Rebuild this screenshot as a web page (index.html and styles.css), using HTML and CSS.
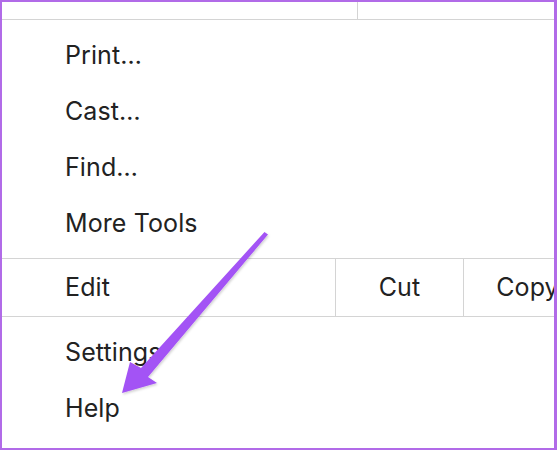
FILE: index.html
```html
<!DOCTYPE html>
<html lang="en">
<head>
<meta charset="utf-8">
<title>Menu</title>
<link rel="stylesheet" href="styles.css">
</head>
<body>
<div class="frame">
  <div class="top-strip">
    <div class="top-cell"></div>
    <div class="top-cell"></div>
  </div>
  <div class="section">
    <div class="item">Print…</div>
    <div class="item">Cast…</div>
    <div class="item">Find…</div>
    <div class="item">More Tools</div>
  </div>
  <div class="edit-row">
    <div class="edit-label">Edit</div>
    <div class="edit-btn">Cut</div>
    <div class="edit-btn">Copy</div>
  </div>
  <div class="section">
    <div class="item">Settings</div>
    <div class="item">Help</div>
  </div>
</div>
<svg class="arrow" width="560" height="450" viewBox="0 0 560 450" aria-hidden="true">
  <defs>
    <filter id="sh" x="-20%" y="-20%" width="140%" height="140%">
      <feDropShadow dx="1" dy="1.5" stdDeviation="1" flood-color="#000" flood-opacity="0.18"/>
    </filter>
  </defs>
  <polygon filter="url(#sh)" fill="#a352f5" points="122,393 157,383 148,377 268,234.5 264.5,232 141,368 130,362"/>
</svg>
</body>
</html>
```

FILE: styles.css
```css
html, body {
  margin: 0;
  padding: 0;
  background: #ffffff;
}

body {
  position: relative;
  width: 560px;
  height: 450px;
  overflow: hidden;
  font-family: "Inter", "Liberation Sans", sans-serif;
  color: #222222;
}

.frame {
  box-sizing: border-box;
  width: 557px;
  height: 450px;
  border: 2px solid #b16be8;
  border-right-width: 3px;
  overflow: hidden;
  display: flex;
  flex-direction: column;
}

.top-strip {
  display: flex;
  height: 17px;
  border-bottom: 1px solid #d4d4d4;
  flex-shrink: 0;
}

.top-cell {
  width: 355px;
  border-right: 1px solid #d4d4d4;
}

.top-cell + .top-cell {
  flex: 1;
  border-right: none;
}

.section {
  padding: 7px 0;
  flex-shrink: 0;
}

.item {
  height: 56px;
  line-height: 56px;
  padding-left: 63px;
  font-size: 25px;
  letter-spacing: 0.1px;
  white-space: nowrap;
}

.edit-row {
  display: flex;
  height: 57px;
  border-top: 1px solid #d4d4d4;
  border-bottom: 1px solid #d4d4d4;
  font-size: 25px;
  letter-spacing: 0.1px;
  line-height: 57px;
  flex-shrink: 0;
  white-space: nowrap;
}

.edit-label {
  width: 270px;
  flex-shrink: 0;
  padding-left: 63px;
  border-right: 1px solid #d4d4d4;
}

.edit-btn {
  width: 127px;
  flex-shrink: 0;
  text-align: center;
  border-right: 1px solid #d4d4d4;
}

.arrow {
  position: absolute;
  top: 0;
  left: 0;
  pointer-events: none;
}
```
